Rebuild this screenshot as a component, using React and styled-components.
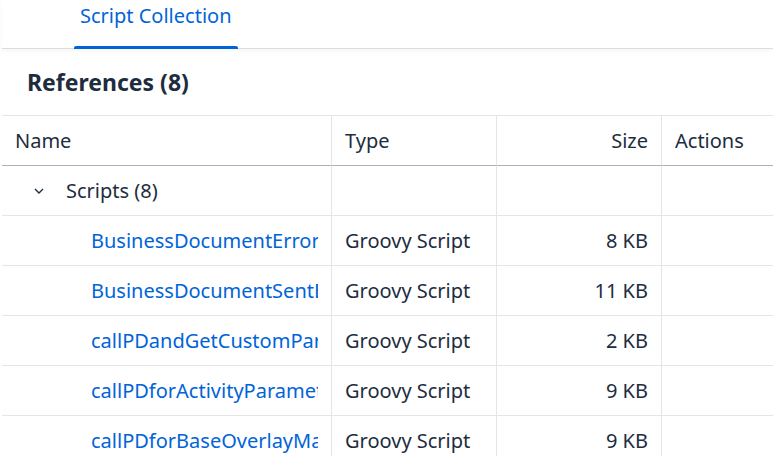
import React from "react"
import styled, { createGlobalStyle } from "styled-components"

const GlobalStyle = createGlobalStyle`
  body {
    margin: 0;
    background: #fff;
    font-family: "Noto Sans", "Open Sans", sans-serif;
    color: #1d2d3e;
  }
`

const Page = styled.div`
  padding-left: 2px;
  width: 771px;
  height: 456px;
  overflow: hidden;
`

const TabBar = styled.div`
  display: flex;
  height: 48px;
  padding-left: 72px;
  border-bottom: 1px solid #dcdcdc;
  box-shadow: 0 2px 4px rgba(0, 0, 0, 0.04);
`

const Tab = styled.div`
  position: relative;
  padding: 2px 6px 0;
  font-size: 20px;
  line-height: 27px;
  color: ${props => (props.active ? "#0064d9" : "#556b82")};
  &::after {
    content: "";
    position: absolute;
    left: 0;
    right: 0;
    bottom: -1px;
    height: 3px;
    border-radius: 2px 2px 0 0;
    background: ${props => (props.active ? "#0064d9" : "transparent")};
  }
`

const TitleBar = styled.div`
  height: 66px;
  display: flex;
  align-items: center;
  padding-left: 25px;
`

const Title = styled.h2`
  margin: 0;
  font-size: 23px;
  font-weight: 700;
  color: #1d2d3e;
`

const Table = styled.div`
  display: grid;
  grid-template-columns: 329px 165px 165px 1fr;
  border-top: 1px solid #e5e5e5;
`

const HeadCell = styled.div`
  height: 49px;
  display: flex;
  align-items: center;
  justify-content: ${props => (props.right ? "flex-end" : "flex-start")};
  padding: 0 13px;
  font-size: 20px;
  border-bottom: 1px solid #a8b3bd;
  border-left: ${props => (props.first ? "none" : "1px solid #e5e5e5")};
`

const Cell = styled.div`
  height: 49px;
  min-width: 0;
  display: flex;
  align-items: center;
  justify-content: ${props => (props.right ? "flex-end" : "flex-start")};
  padding: 0 13px 0 ${props => props.indent ?? 13}px;
  font-size: 20px;
  white-space: nowrap;
  border-bottom: 1px solid #e5e5e5;
  border-left: ${props => (props.first ? "none" : "1px solid #e5e5e5")};
`

const Chevron = styled.span`
  display: inline-flex;
  width: 12px;
  margin: 0 21px 0 31px;
`

const ScriptLink = styled.a`
  display: block;
  overflow: hidden;
  white-space: nowrap;
  color: #0064d9;
  text-decoration: none;
  cursor: pointer;
`

const SCRIPTS = [
  { name: "BusinessDocumentErrorEvent", size: "8 KB" },
  { name: "BusinessDocumentSentEvent", size: "11 KB" },
  { name: "callPDandGetCustomParameters", size: "2 KB" },
  { name: "callPDforActivityParameters", size: "9 KB" },
  { name: "callPDforBaseOverlayMapping", size: "9 KB" },
  { name: "callPDforCodeListMapping", size: "4 KB" },
]

const App = () => (
  <Page>
    <GlobalStyle />
    <TabBar>
      <Tab active>Script Collection</Tab>
    </TabBar>
    <TitleBar>
      <Title>References (8)</Title>
    </TitleBar>
    <Table>
      <HeadCell first>Name</HeadCell>
      <HeadCell>Type</HeadCell>
      <HeadCell right>Size</HeadCell>
      <HeadCell>Actions</HeadCell>

      <Cell first indent={0}>
        <Chevron>
          <svg width="12" height="12" viewBox="0 0 12 12">
            <path d="M2 4 L6 8 L10 4" fill="none" stroke="#1d2d3e" strokeWidth="1.4" />
          </svg>
        </Chevron>
        Scripts (8)
      </Cell>
      <Cell />
      <Cell />
      <Cell />

      {SCRIPTS.map(item => (
        <React.Fragment key={item.name}>
          <Cell first indent={89}>
            <ScriptLink>{item.name}</ScriptLink>
          </Cell>
          <Cell>Groovy Script</Cell>
          <Cell right>{item.size}</Cell>
          <Cell />
        </React.Fragment>
      ))}
    </Table>
  </Page>
)

export default App
